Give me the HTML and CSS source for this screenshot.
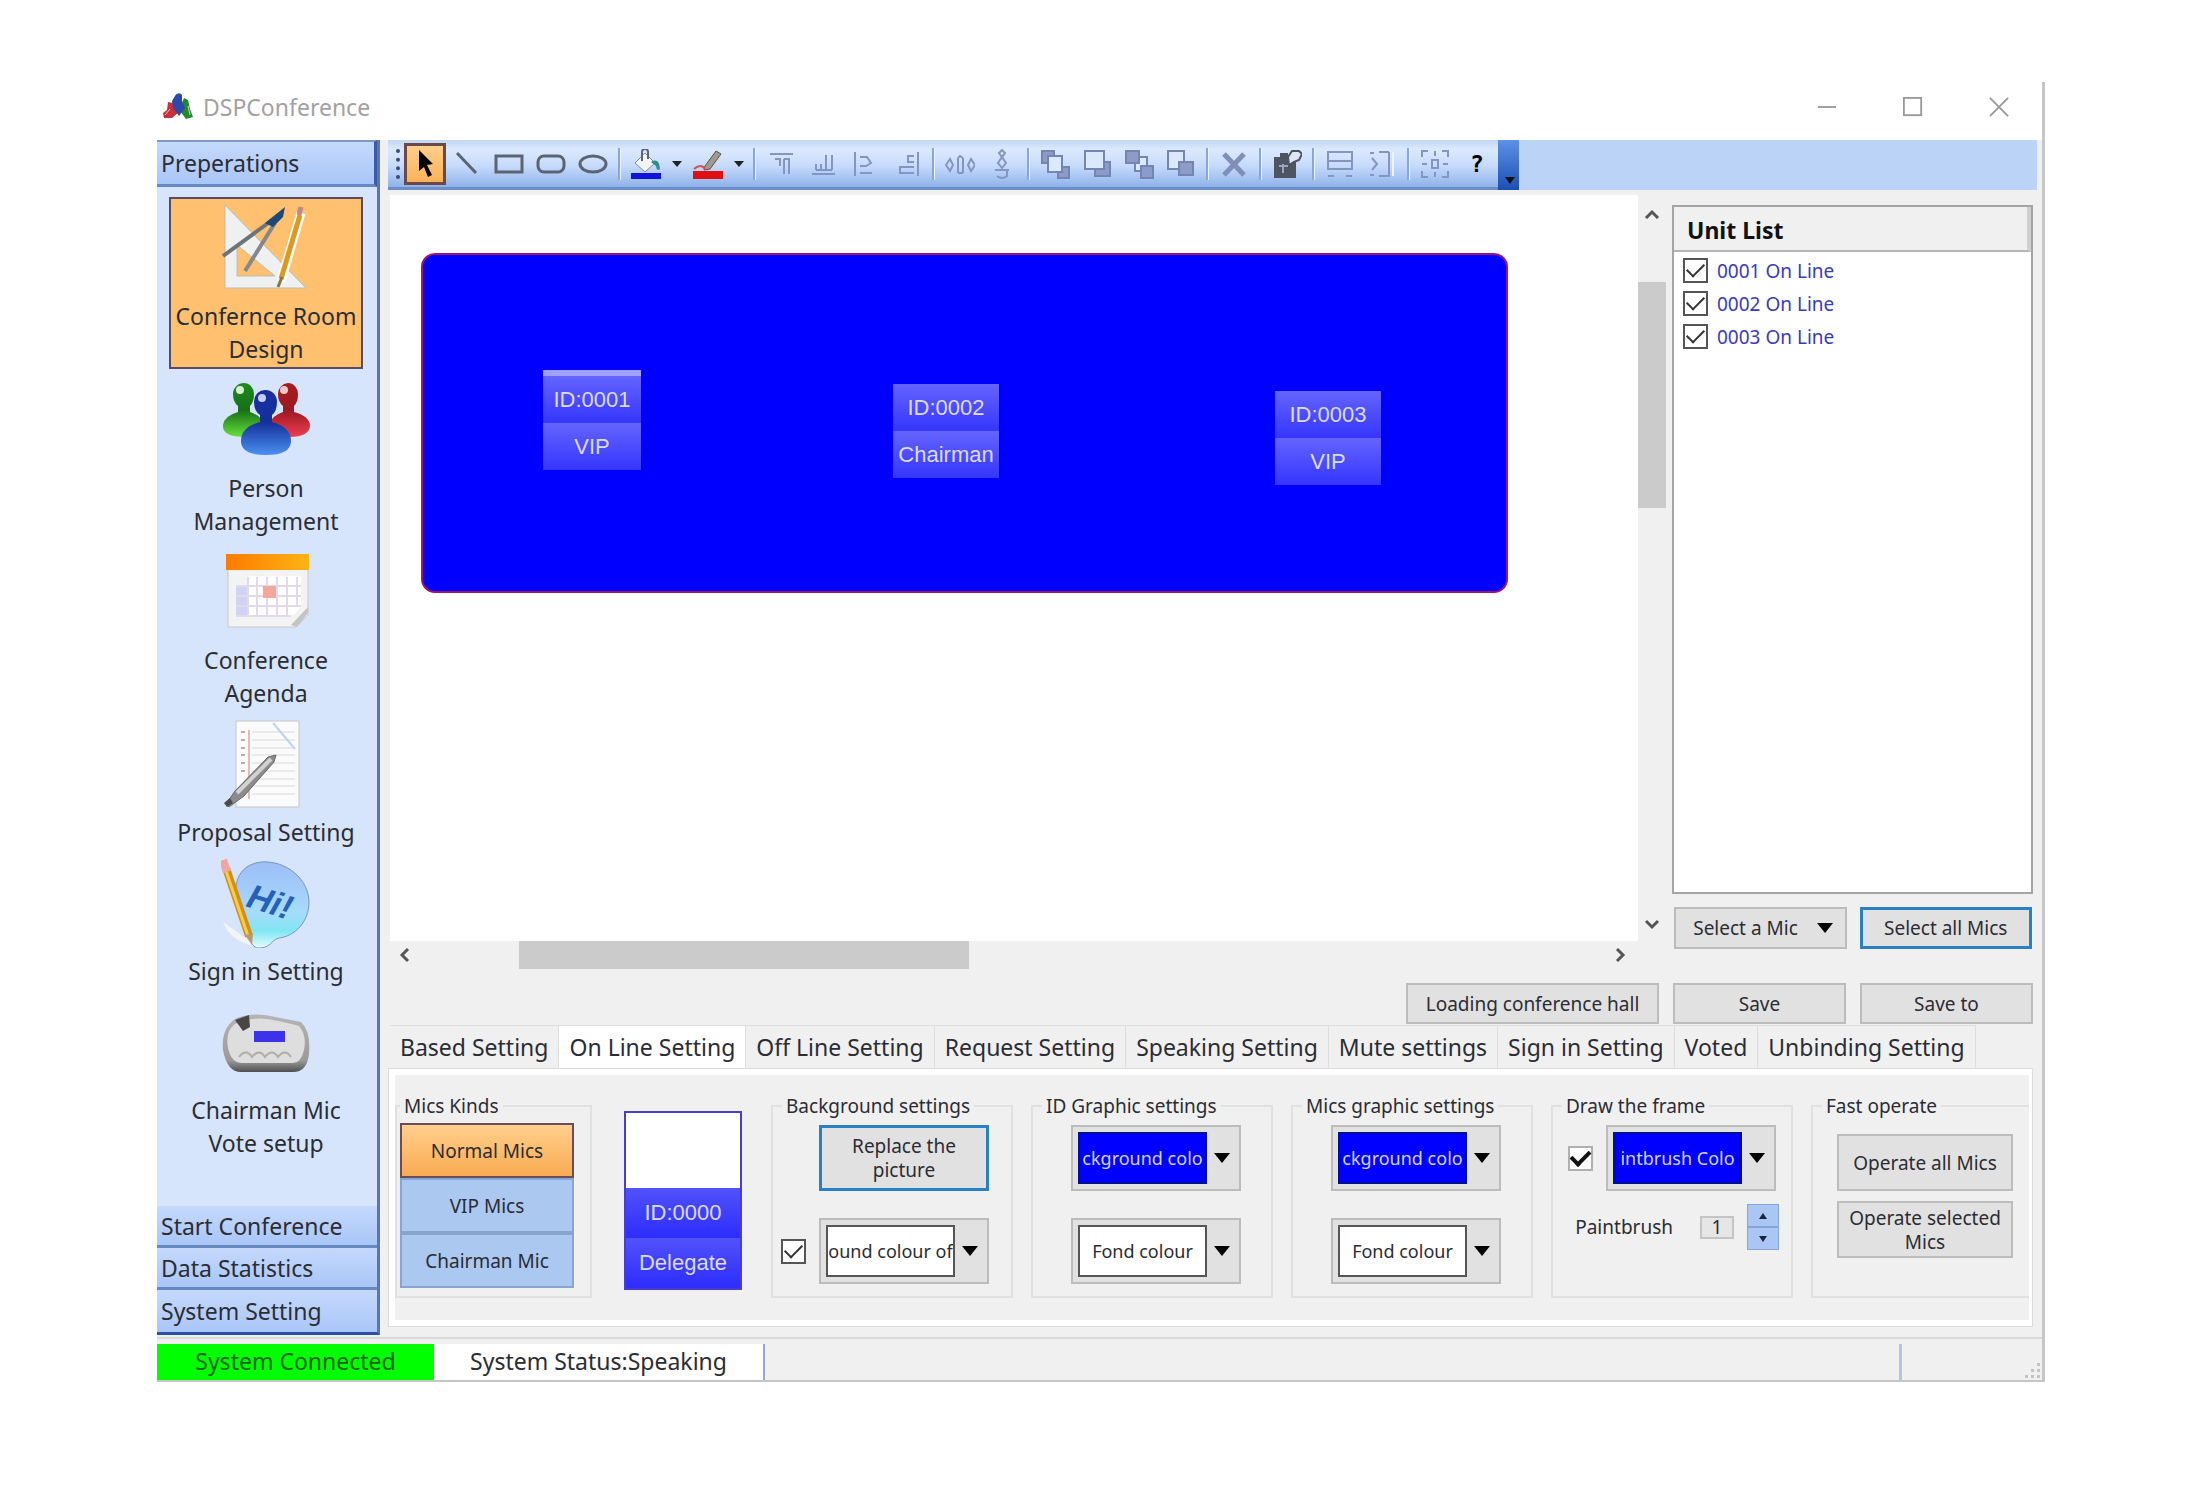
FILE: index.html
```html
<!DOCTYPE html>
<html lang="en">
<head>
  <meta charset="UTF-8">
  <title>DSPConference</title>
  <link rel="stylesheet" href="styles.css">
</head>
<body>

<div class="window">
  <header class="titlebar">
    <svg class="app-icon" viewBox="0 0 32 32">
      <path d="M11 12 L18 20 L10 27 L2 27 L1 22 L5 19 L6 11 Z" fill="#c8303c"/>
      <path d="M22 7 L26 9 L28 18 L31 26 L24 28 L18 20 L20 12 Z" fill="#1d8a2c"/>
      <path d="M13 5 A4 4 0 0 1 20 4 L20 10 L23 17 L17 25 L11 17 L10 10 Z" fill="#2b4aa8"/>
      <path d="M3 24 L8 18 M26 15 L28 24" stroke="#f3c0c4" stroke-width="1"/>
    </svg>
    <h1>DSPConference</h1>
    <div class="window-buttons">
      <button type="button" aria-label="Minimize"><svg viewBox="0 0 22 22"><path d="M1 11 H21"/></svg></button>
      <button type="button" aria-label="Maximize"><svg viewBox="0 0 22 22"><rect x="1" y="1" width="19" height="19"/></svg></button>
      <button type="button" aria-label="Close"><svg viewBox="0 0 22 22"><path d="M1 1 L21 21 M21 1 L1 21"/></svg></button>
    </div>
  </header>

  <div class="content">
    <nav class="sidebar">
      <button type="button" class="section first">Preperations</button>
      <div class="items">
        <button type="button" class="item active">
          <svg viewBox="0 0 90 90">
            <path d="M4 2 L85 85 H4 Z M16 42 V73 H54 Z" fill="#eef1f0" fill-rule="evenodd" stroke="#b9bdb8" stroke-width="1"/>
            <path d="M2 53 L50 18" stroke="#6d7479" stroke-width="4"/>
            <path d="M24 68 L54 20" stroke="#85878d" stroke-width="4"/>
            <path d="M44 20 L64 4 L62 14 L52 24 Z" fill="#1c4a78"/>
            <path d="M80 10 L60 78" stroke="#fff" stroke-width="9"/>
            <path d="M79 12 L60 76" stroke="#d99a1f" stroke-width="5"/>
            <path d="M80 4 L78 12" stroke="#c08a86" stroke-width="5"/>
            <path d="M61 74 L57 84" stroke="#8c7343" stroke-width="3"/>
          </svg>
          Confernce Room<br>Design
        </button>
        <button type="button" class="item">
          <svg viewBox="0 0 90 90">
            <defs>
              <linearGradient id="gGreen" x1="0" y1="0" x2="0" y2="1"><stop offset="0" stop-color="#1d8a1d"/><stop offset=".5" stop-color="#177017"/><stop offset="1" stop-color="#66e03c"/></linearGradient>
              <linearGradient id="gRed" x1="0" y1="0" x2="0" y2="1"><stop offset="0" stop-color="#a81c1c"/><stop offset=".5" stop-color="#9c1822"/><stop offset="1" stop-color="#f03e50"/></linearGradient>
              <linearGradient id="gBlue" x1="0" y1="0" x2="0" y2="1"><stop offset="0" stop-color="#1a2fa0"/><stop offset=".5" stop-color="#13319a"/><stop offset="1" stop-color="#4c90f0"/></linearGradient>
            </defs>
            <path d="M23 8 a10 11 0 0 1 10 11 q0 8 -4 12 v6 q12 4 13 12 q1 13 -18 13 q-23 0 -22 -12 q1 -9 15 -13 v-6 q-5 -4 -5 -12 a11 11 0 0 1 11 -11z" fill="url(#gGreen)"/>
            <path d="M67 8 a10 11 0 0 1 10 11 q0 8 -4 12 v6 q15 4 16 13 q0 12 -21 12 q-20 0 -19 -13 q1 -8 13 -12 v-6 q-5 -4 -5 -12 a11 11 0 0 1 10 -11z" fill="url(#gRed)"/>
            <path d="M45 15 a11 12 0 0 1 11 12 q0 9 -5 13 v7 q19 5 19 19 q0 14 -25 14 q-25 0 -25 -14 q0 -14 19 -19 v-7 q-6 -4 -6 -13 a11 12 0 0 1 12 -12z" fill="url(#gBlue)"/>
            <circle cx="19" cy="15" r="4" fill="#d5f2cc"/>
            <circle cx="63" cy="15" r="4" fill="#f2c6c6"/>
            <circle cx="41" cy="23" r="4" fill="#c5cdf5"/>
          </svg>
          Person<br>Management
        </button>
        <button type="button" class="item">
          <svg viewBox="0 0 90 90">
            <defs>
              <linearGradient id="gCal"><stop offset="0" stop-color="#ff7a00"/><stop offset="1" stop-color="#fbb414"/></linearGradient>
            </defs>
            <path d="M7 20 H87 V68 L75 80 H7 Z" fill="#f3f3f3" stroke="#c9c9c9"/>
            <rect x="5" y="7" width="83" height="16" fill="url(#gCal)"/>
            <path d="M15 39 H27 V29 H80 V60 L72 68 H15 Z" fill="#fff"/>
            <rect x="15" y="39" width="11" height="30" fill="#cfd3f5"/>
            <path d="M15 39 H80 M15 49 H80 M15 59 H80 M15 69 H70 M27 30 V69 M36 30 V69 M46 30 V69 M56 30 V69 M66 30 V69 M76 30 V60" stroke="#e2dae9" stroke-width="2" fill="none"/>
            <rect x="42" y="39" width="13" height="12" fill="#f3a79b"/>
            <path d="M70 78 L87 60 V66 L76 80 Z" fill="#c4c4c4"/>
          </svg>
          Conference<br>Agenda
        </button>
        <button type="button" class="item">
          <svg viewBox="0 0 90 90">
            <path d="M15 2 H78 V88 H15 Z" fill="#fbfbfb" stroke="#c6c6c6"/>
            <path d="M31 13 H74 M31 21 H74 M31 29 H74 M31 36 H74 M31 44 H74 M31 52 H74 M31 60 H74 M31 67 H74 M31 75 H74" stroke="#d5dade" stroke-width="1"/>
            <path d="M20 13 H24 M20 21 H24 M20 29 H24 M20 36 H24 M20 44 H24 M20 52 H24" stroke="#c3a9a9" stroke-width="2"/>
            <path d="M28 11 V80" stroke="#f0b5b5" stroke-width="2"/>
            <path d="M52 4 L74 30" stroke="#bcd4ee" stroke-width="2"/>
            <path d="M5 85 L14 72 L47 38 L55 36 L53 43 L23 77 L8 88 Z" fill="#8c8c8c" stroke="#6a6a6a" stroke-width="1"/>
            <path d="M16 74 L50 40" stroke="#d2d2d2" stroke-width="4"/>
            <path d="M3 84 L9 79 L12 84 L6 88 Z" fill="#4a4a4a"/>
          </svg>
          Proposal Setting
        </button>
        <button type="button" class="item">
          <svg viewBox="0 0 90 90">
            <defs>
              <linearGradient id="gHi" x1="0" y1="0" x2="0" y2="1"><stop offset="0" stop-color="#9dbdf8"/><stop offset=".6" stop-color="#a6dcfa"/><stop offset=".8" stop-color="#7fe6f4"/><stop offset="1" stop-color="#e8fbfb"/></linearGradient>
            </defs>
            <path d="M2 64 L30 84 L34 88 Q10 84 2 64Z" fill="#f4f4f4"/>
            <path d="M40 4 C66 2 88 22 88 44 C88 64 74 78 58 80 C50 82 50 90 38 90 C30 90 28 80 24 66 C12 48 6 8 40 4 Z" fill="url(#gHi)" stroke="#7c94bd" stroke-width="1"/>
            <text x="24" y="48" transform="rotate(18 24 48)" class="hi">Hi!</text>
            <path d="M5 10 L28 78" stroke="#d28f19" stroke-width="8"/>
            <path d="M4 10 L27 78" stroke="#f8cd4a" stroke-width="3"/>
            <path d="M2 2 L6 14" stroke="#efa6a0" stroke-width="8"/>
            <path d="M24 77 L32 75 L31 87 Z" fill="#b99a6c"/>
          </svg>
          Sign in Setting
        </button>
        <button type="button" class="item">
          <svg viewBox="0 0 90 90">
            <defs>
              <linearGradient id="gMic" x1="0" y1="0" x2="0" y2="1"><stop offset="0" stop-color="#b5b5b5"/><stop offset=".8" stop-color="#9a9a9a"/><stop offset="1" stop-color="#4f4f4f"/></linearGradient>
            </defs>
            <path d="M14 22 Q26 16 44 18 Q64 22 80 25 Q90 34 88 57 Q86 75 72 75 H20 Q6 75 2 53 Q0 32 14 22Z" fill="url(#gMic)"/>
            <path d="M14 27 Q30 20 46 22 Q64 25 78 29 Q86 38 83 53 Q80 66 72 66 H20 Q10 65 7 51 Q4 34 14 27Z" fill="#dedede"/>
            <path d="M14 23 L28 18 L29 30 L22 34 Z" fill="#4a4644"/>
            <rect x="33" y="34" width="31" height="11" fill="#3c32ea"/>
            <path d="M18 60 q7 -9 13 0 q7 -9 13 0 q7 -9 13 0 q7 -9 13 0" stroke="#b3aca6" fill="none" stroke-width="2"/>
          </svg>
          Chairman Mic<br>Vote setup
        </button>
      </div>
      <button type="button" class="section">Start Conference</button>
      <button type="button" class="section">Data Statistics</button>
      <button type="button" class="section">System Setting</button>
    </nav>

    <main class="main">
      <div class="toolbar-row">
        <div class="toolbar">
          <span class="grip"></span>
          <button type="button" class="tool active" aria-label="Select"><svg viewBox="0 0 30 30"><path d="M9 1 L23 15 L17 16 L22 26 L18 28 L14 18 L9 22 Z" fill="#000"/></svg></button>
          <button type="button" class="tool" aria-label="Line"><svg viewBox="0 0 30 30"><path d="M5 4 L24 24" class="ln"/></svg></button>
          <button type="button" class="tool" aria-label="Rectangle"><svg viewBox="0 0 30 30"><rect x="2" y="7" width="26" height="16" class="ln"/></svg></button>
          <button type="button" class="tool" aria-label="Rounded rectangle"><svg viewBox="0 0 30 30"><rect x="2" y="7" width="26" height="16" rx="6" class="ln"/></svg></button>
          <button type="button" class="tool" aria-label="Ellipse"><svg viewBox="0 0 30 30"><ellipse cx="15" cy="15" rx="13" ry="8" class="ln"/></svg></button>
          <span class="sep"></span>
          <button type="button" class="tool" aria-label="Fill colour"><svg viewBox="0 0 30 30"><path d="M4 14 L14 4 L24 14 L14 23 Z" fill="#f1f4f2" stroke="#7f8a8a"/><path d="M11 12 V3 a3 3 0 0 1 6 0 V10" class="ln thin"/><path d="M20 13 Q28 8 29 20 Q26 23 25 17 Z" fill="#2a8f8c"/><rect y="24" width="30" height="6" fill="#1414d8"/></svg></button>
          <button type="button" class="drop" aria-label="Fill colours"></button>
          <button type="button" class="tool" aria-label="Line colour"><svg viewBox="0 0 30 30"><path d="M12 17 L23 2 L28 5 L17 20 L11 21 Z" fill="#a39a8c" stroke="#55504a"/><path d="M1 20 Q8 14 12 20" stroke="#c55" fill="none" stroke-width="2"/><rect y="22" width="30" height="8" fill="#e01010"/></svg></button>
          <button type="button" class="drop" aria-label="Line colours"></button>
          <span class="sep"></span>
          <button type="button" class="tool" aria-label="Align top"><svg viewBox="0 0 30 30" class="dim"><path d="M4 5 H27 M9 10 H14 V17 M18 10 V25 M18 10 H23 V25"/></svg></button>
          <button type="button" class="tool" aria-label="Align bottom"><svg viewBox="0 0 30 30" class="dim"><path d="M4 25 H27 M8 21 V15 M13 21 V15 M18 21 V6 M24 21 V6 M8 21 H24"/></svg></button>
          <button type="button" class="tool" aria-label="Align left"><svg viewBox="0 0 30 30" class="dim"><path d="M5 3 V27 M10 8 H17 L21 14 L16 17 H10 M10 24 H22"/></svg></button>
          <button type="button" class="tool" aria-label="Align right"><svg viewBox="0 0 30 30" class="dim"><path d="M26 3 V27 M22 7 H16 V13 H22 M22 18 H8 V24 H22"/></svg></button>
          <span class="sep"></span>
          <button type="button" class="tool" aria-label="Space across"><svg viewBox="0 0 30 30" class="dim"><path d="M5 10 L1 16 L5 22 L8 16 Z M13 9 V24 M18 9 V24 M13 9 L15 7 L18 9 M13 24 H18 M26 10 L23 16 L26 22 L30 16 Z"/></svg></button>
          <button type="button" class="tool" aria-label="Space down"><svg viewBox="0 0 30 30" class="dim"><path d="M15 1 L18 4 L15 8 L12 4 Z M15 8 L19 14 L15 19 L11 14 Z M8 21 H22 M10 27 Q15 31 20 27 V21"/></svg></button>
          <span class="sep"></span>
          <button type="button" class="tool" aria-label="Bring to front"><svg viewBox="0 0 30 30" class="stack"><rect x="2" y="2" width="12" height="12"/><rect x="18" y="18" width="11" height="11"/><rect x="8" y="7" width="14" height="16" class="sheet"/></svg></button>
          <button type="button" class="tool" aria-label="Send to back"><svg viewBox="0 0 30 30" class="stack"><rect x="13" y="13" width="15" height="14"/><rect x="3" y="2" width="19" height="18" class="sheet"/></svg></button>
          <button type="button" class="tool" aria-label="Bring forward"><svg viewBox="0 0 30 30" class="stack"><rect x="11" y="8" width="12" height="14" class="sheet"/><rect x="2" y="2" width="13" height="12"/><rect x="17" y="17" width="12" height="12"/></svg></button>
          <button type="button" class="tool" aria-label="Send backward"><svg viewBox="0 0 30 30" class="stack"><rect x="2" y="2" width="16" height="18" class="sheet"/><rect x="13" y="13" width="14" height="13"/></svg></button>
          <span class="sep"></span>
          <button type="button" class="tool" aria-label="Delete"><svg viewBox="0 0 30 30"><path d="M5 5 L25 26 M25 5 L5 26" stroke="#7f8fb8" stroke-width="5"/></svg></button>
          <span class="sep"></span>
          <button type="button" class="tool" aria-label="Properties"><svg viewBox="0 0 30 30"><path d="M2 8 H8 V4 H16 V8 H24 V29 H2 Z" fill="#4d5462"/><path d="M16 8 L20 2 H27 L30 5 L27 11 L22 13 L17 16 Z" fill="#dfe7f6" stroke="#4d5462" stroke-width="2"/><path d="M11 15 V24 M7 17 H16" stroke="#98a5c0" stroke-width="2"/></svg></button>
          <span class="sep"></span>
          <button type="button" class="tool" aria-label="Same width"><svg viewBox="0 0 30 30" class="dim"><path d="M3 12 V3 H27 V20 H3 V12 H27 M3 27 H9 M21 27 H27"/></svg></button>
          <button type="button" class="tool" aria-label="Same height"><svg viewBox="0 0 30 30" class="dim"><path d="M3 4 H7 M3 26 H7 M12 3 H22 M12 27 H22 V3 M5 9 L10 15 L5 21"/><path d="M26 3 V27" stroke="#eef4ff"/></svg></button>
          <span class="sep"></span>
          <button type="button" class="tool" aria-label="Centre"><svg viewBox="0 0 30 30" class="dim"><path d="M2 8 V2 H8 M22 2 H28 V8 M28 22 V28 H22 M8 28 H2 V22 M12 11 H18 V19 H12 Z M15 2 V7 M15 23 V28 M2 15 H7 M23 15 H28"/></svg></button>
          <button type="button" class="tool help" aria-label="Help">?</button>
          <span class="overflow"></span>
        </div>
      </div>

      <div class="workspace">
        <div class="hall">
          <div class="hall-view">
            <div class="table">
              <div class="mic mic-1"><span>ID:0001</span><span>VIP</span></div>
              <div class="mic mic-2"><span>ID:0002</span><span>Chairman</span></div>
              <div class="mic mic-3"><span>ID:0003</span><span>VIP</span></div>
            </div>
          </div>
          <div class="scroll-v">
            <svg viewBox="0 0 16 16"><path d="M2 11 L8 5 L14 11"/></svg>
            <div class="thumb"></div>
            <svg viewBox="0 0 16 16"><path d="M2 5 L8 11 L14 5"/></svg>
          </div>
          <div class="scroll-h">
            <svg viewBox="0 0 16 16"><path d="M11 2 L5 8 L11 14"/></svg>
            <div class="thumb"></div>
            <svg viewBox="0 0 16 16"><path d="M5 2 L11 8 L5 14"/></svg>
          </div>
        </div>

        <aside class="units">
          <div class="unit-list">
            <h2>Unit List</h2>
            <label><input type="checkbox" class="check" checked>0001 On Line</label>
            <label><input type="checkbox" class="check" checked>0002 On Line</label>
            <label><input type="checkbox" class="check" checked>0003 On Line</label>
          </div>
          <div class="unit-actions">
            <span class="picker mic-picker">
              <select aria-label="Select a Mic"><option>Select a Mic</option></select>
            </span>
            <button type="button" class="btn focus">Select all Mics</button>
          </div>
        </aside>
      </div>

      <div class="hall-actions">
        <button type="button" class="btn load">Loading conference hall</button>
        <button type="button" class="btn">Save</button>
        <button type="button" class="btn">Save to</button>
      </div>

      <div class="tabs">
        <button type="button">Based Setting</button>
        <button type="button" class="active">On Line Setting</button>
        <button type="button">Off Line Setting</button>
        <button type="button">Request Setting</button>
        <button type="button">Speaking Setting</button>
        <button type="button">Mute settings</button>
        <button type="button">Sign in Setting</button>
        <button type="button">Voted</button>
        <button type="button">Unbinding Setting</button>
      </div>

      <div class="panel">
        <fieldset class="kinds">
          <legend>Mics Kinds</legend>
          <button type="button" class="active">Normal Mics</button>
          <button type="button">VIP Mics</button>
          <button type="button">Chairman Mic</button>
        </fieldset>

        <div class="preview">
          <span>ID:0000</span>
          <span>Delegate</span>
        </div>

        <fieldset>
          <legend>Background settings</legend>
          <div class="row">
            <button type="button" class="btn tall focus">Replace the<br>picture</button>
          </div>
          <div class="row">
            <input type="checkbox" class="check" aria-label="Use background colour" checked>
            <span class="picker"><select aria-label="Background colour"><option>ound colour of</option></select></span>
          </div>
        </fieldset>

        <fieldset>
          <legend>ID Graphic settings</legend>
          <div class="row">
            <span class="picker"><select class="blue" aria-label="ID background colour"><option>ckground colo</option></select></span>
          </div>
          <div class="row">
            <span class="picker"><select aria-label="ID font colour"><option>Fond colour</option></select></span>
          </div>
        </fieldset>

        <fieldset>
          <legend>Mics graphic settings</legend>
          <div class="row">
            <span class="picker"><select class="blue" aria-label="Mic background colour"><option>ckground colo</option></select></span>
          </div>
          <div class="row">
            <span class="picker"><select aria-label="Mic font colour"><option>Fond colour</option></select></span>
          </div>
        </fieldset>

        <fieldset class="frame">
          <legend>Draw the frame</legend>
          <div class="row">
            <input type="checkbox" class="check bold" aria-label="Draw the frame" checked>
            <span class="picker"><select class="blue" aria-label="Paintbrush colour"><option>intbrush Colo</option></select></span>
          </div>
          <div class="row brush">
            <label for="brush">Paintbrush</label>
            <input type="text" id="brush" value="1">
            <span class="spinner">
              <button type="button" aria-label="Thicker"></button>
              <button type="button" class="down" aria-label="Thinner"></button>
            </span>
          </div>
        </fieldset>

        <fieldset class="fast">
          <legend>Fast operate</legend>
          <button type="button" class="btn">Operate all Mics</button>
          <button type="button" class="btn">Operate selected<br>Mics</button>
        </fieldset>
      </div>
    </main>
  </div>

  <footer class="statusbar">
    <span class="connected">System Connected</span>
    <span class="status">System Status:Speaking</span>
    <span class="rest"></span>
    <span class="corner">
      <svg viewBox="0 0 18 18"><path d="M13 1h3v3h-3z M13 7h3v3h-3z M7 7h3v3H7z M13 13h3v3h-3z M7 13h3v3H7z M1 13h3v3H1z" fill="#c3c3c3"/></svg>
    </span>
  </footer>
</div>

</body>
</html>
```
FILE: styles.css
```css
* {
  box-sizing: border-box;
}
body {
  margin: 0;
  min-height: 100vh;
  padding: 82px 140px 114px 157px;
  display: flex;
  background: #fff;
  font-family: "Noto Sans", "Open Sans", sans-serif;
  font-size: 23px;
  color: #2c2c34;
}
button, select, input {
  font: inherit;
  color: inherit;
  margin: 0;
  padding: 0;
  border: 0;
  background: none;
}
.window {
  flex: 1;
  min-width: 0;
  display: flex;
  flex-direction: column;
  background: #f0f0f0;
  border-right: 3px solid #c6c6c6;
  border-bottom: 2px solid #c6c6c6;
}

/* title bar */
.titlebar {
  height: 58px;
  display: flex;
  align-items: center;
  padding: 0 33px 8px 5px;
  background: #fff;
}
.app-icon {
  width: 32px;
  height: 32px;
  margin-right: 9px;
}
h1 {
  margin: 0;
  font-size: 23px;
  font-weight: normal;
  color: #a2a2a2;
}
.window-buttons {
  margin-left: auto;
  display: flex;
  gap: 66px;
}
.window-buttons svg {
  display: block;
  width: 20px;
  height: 20px;
  fill: none;
  stroke: #999;
  stroke-width: 2;
}

/* left menu */
.content {
  flex: 1;
  display: flex;
}
.sidebar {
  width: 223px;
  margin-right: 8px;
  display: flex;
  flex-direction: column;
  background: #d6e5fb;
  border-right: 3px solid #5a74b4;
  border-bottom: 3px solid #2a50a4;
}
.section {
  height: 42px;
  padding: 0 4px;
  text-align: left;
  line-height: 30px;
  background: linear-gradient(#c5d9fc, #a9c6f8);
  border-bottom: 3px solid #6689c2;
}
.section:last-child {
  border-bottom: 0;
}
.section.first {
  height: 47px;
  border-top: 2px solid #7d9ac6;
  border-right: 3px solid #3a5ca8;
}
.items {
  flex: 1;
  padding: 10px 12px 0;
}
.item {
  display: block;
  width: 194px;
  padding: 6px 0 3px;
  line-height: 33px;
  white-space: nowrap;
}
.item.active {
  padding: 4px 0 1px;
  background: #ffc06f;
  border: 2px solid #5a4a64;
}
.item svg {
  display: block;
  width: 90px;
  height: 90px;
  margin: 0 auto 7px;
}
.hi {
  font: italic bold 34px "Liberation Sans", sans-serif;
  fill: #2760b8;
}

/* drawing tools */
.main {
  flex: 1;
  min-width: 0;
  display: flex;
  flex-direction: column;
  padding: 0 5px 8px 0;
}
.toolbar-row {
  height: 50px;
  display: flex;
  background: #bcd3f8;
}
.toolbar {
  display: flex;
  align-items: center;
  background: linear-gradient(#c3d6f5, #dbe9fd 20%, #c6dbfb 55%, #8fb2ea);
  border-bottom: 3px solid #6c8fc9;
}
.grip {
  width: 4px;
  height: 30px;
  margin: 0 4px 0 8px;
  border-left: 4px dotted #3e4c6c;
}
.tool {
  width: 42px;
  height: 42px;
}
.tool.active {
  background: linear-gradient(#ffce8b, #fbb259);
  border: 3px solid #6a4a48;
}
.tool svg {
  display: block;
  width: 30px;
  height: 30px;
  margin: auto;
}
.tool .ln {
  fill: none;
  stroke: #5c6474;
  stroke-width: 3;
}
.tool .ln.thin {
  stroke-width: 2;
}
.dim {
  fill: none;
  stroke: #8395c0;
  stroke-width: 2;
}
.stack {
  fill: #8b9cc8;
  stroke: #7485b2;
  stroke-width: 2;
}
.stack .sheet {
  fill: #dce8fb;
}
.drop {
  width: 20px;
  height: 42px;
}
.drop::after {
  content: "";
  display: block;
  width: 0;
  margin: auto;
  border: 5px solid transparent;
  border-top: 6px solid #222;
  border-bottom: 0;
}
.sep {
  width: 3px;
  height: 32px;
  margin: 0 4px;
  border-left: 2px solid #8ba6d6;
  border-right: 1px solid #e8f1ff;
}
.help {
  font-family: "DejaVu Sans Mono", monospace;
  font-weight: bold;
  color: #000;
}
.overflow {
  width: 21px;
  height: 50px;
  margin: 0 0 -3px;
  display: flex;
  align-items: flex-end;
  background: linear-gradient(#5d92e6, #1c4fb4);
}
.overflow::after {
  content: "";
  margin: 0 0 6px 7px;
  border: 5px solid transparent;
  border-top: 7px solid #111;
  border-bottom: 0;
}

/* conference hall */
.workspace {
  flex: 1;
  display: flex;
  gap: 6px;
  padding: 5px 4px 0 2px;
}
.hall {
  flex: 1;
  display: grid;
  grid-template-columns: 1fr 28px;
  grid-template-rows: 1fr 28px;
}
.hall-view {
  position: relative;
  background: #fff;
}
.table {
  position: absolute;
  left: 31px;
  top: 58px;
  width: 1087px;
  height: 340px;
  background: #00f;
  border: 2px solid #a0146e;
  border-radius: 14px;
}
.mic {
  position: absolute;
  width: 106px;
  color: #dcdcff;
  font: 22px "Liberation Sans", sans-serif;
  text-align: center;
}
.mic span {
  display: block;
  line-height: 47px;
  background: linear-gradient(#6464ff, #3535ff);
}
.mic-1 {
  left: 120px;
  top: 115px;
  width: 98px;
  border-top: 6px solid #a0a0ff;
}
.mic-2 {
  left: 470px;
  top: 129px;
}
.mic-3 {
  left: 852px;
  top: 136px;
}
.scroll-v, .scroll-h {
  display: flex;
  justify-content: space-between;
  align-items: center;
}
.scroll-v {
  flex-direction: column;
  padding: 12px 0 9px;
}
.scroll-h {
  padding: 0 10px 0 7px;
}
.hall svg {
  width: 16px;
  height: 16px;
  fill: none;
  stroke: #555;
  stroke-width: 3;
}
.thumb {
  background: #cbcbcb;
}
.scroll-v .thumb {
  width: 28px;
  height: 226px;
  margin: 59px 0 auto;
}
.scroll-h .thumb {
  width: 450px;
  height: 28px;
  margin: 0 auto 0 106px;
}

/* unit list */
.units {
  width: 361px;
  padding-top: 10px;
  display: flex;
  flex-direction: column;
}
.unit-list {
  flex: 1;
  background: #fff;
  border: 2px solid #a4a4a4;
  color: #3a3ac0;
  font-size: 19px;
}
.unit-list h2 {
  margin: 0 0 2px;
  height: 45px;
  padding-left: 13px;
  line-height: 46px;
  font-size: 23px;
  color: #111;
  background: #f0f0f0;
  border-bottom: 2px solid #b4b4b4;
  border-right: 4px solid #d0d0d0;
}
.unit-list label {
  display: flex;
  align-items: center;
  gap: 9px;
  height: 33px;
  padding-left: 9px;
}
.check {
  appearance: none;
  width: 25px;
  height: 25px;
  display: grid;
  place-items: center;
  background: #fff;
  border: 2px solid #555;
}
.check:checked::after {
  content: "";
  width: 15px;
  height: 8px;
  margin-bottom: 5px;
  border-left: 2px solid #333;
  border-bottom: 2px solid #333;
  transform: rotate(-45deg);
}
.check.bold {
  border-color: #b0b0b0;
}
.check.bold::after {
  border-width: 4px;
  border-color: #111;
}
.unit-actions {
  height: 75px;
  padding: 13px 1px 20px 2px;
  display: grid;
  grid-template-columns: 1fr 1fr;
  gap: 13px;
}
.btn, .picker {
  font-size: 19px;
  line-height: 24px;
  background: #e1e1e1;
  border: 2px solid #bcbcbc;
}
.btn.focus {
  border: 3px solid #2a80c4;
}
.picker {
  display: flex;
  align-items: center;
  width: 170px;
  height: 66px;
  padding-left: 5px;
}
.picker select {
  appearance: none;
  width: 129px;
  height: 52px;
  background: #fff;
  border: 2px solid #555;
  font-size: 18px;
  text-align: center;
}
.picker select.blue {
  background: #00f;
  border-color: #001090;
  color: #d4d4ff;
}
.picker::after {
  content: "";
  margin-left: 7px;
  border: 8px solid transparent;
  border-top: 10px solid #000;
  border-bottom: 0;
}
.mic-picker {
  width: auto;
  height: auto;
}
.mic-picker select {
  height: 36px;
  background: none;
  border: 0;
  font-size: 19px;
}
.hall-actions {
  display: flex;
  justify-content: flex-end;
  gap: 14px;
  padding: 14px 4px 1px;
}
.hall-actions .btn {
  width: 173px;
  height: 41px;
}
.hall-actions .load {
  width: 253px;
}

/* settings */
.tabs {
  display: flex;
  height: 43px;
  padding-left: 2px;
}
.tabs button {
  padding: 0 10px;
  border: 1px solid #dedede;
  border-width: 1px 1px 0 0;
  white-space: nowrap;
}
.tabs .active {
  background: #fff;
}
.panel {
  display: flex;
  align-items: flex-start;
  gap: 18px;
  height: 259px;
  margin-right: 4px;
  padding: 18px 0 0;
  border: 7px solid #fff;
  border-right-width: 4px;
  outline: 1px solid #dcdcdc;
  outline-offset: -1px;
  font-size: 19px;
}
fieldset {
  width: 242px;
  height: 205px;
  margin: 0;
  padding: 6px 0 0;
  border: 2px solid #e0e0e0;
}
legend {
  margin-left: 9px;
  padding: 0 4px;
  line-height: 26px;
}
.kinds {
  width: 197px;
  padding: 4px 0 0 3px;
}
.kinds legend {
  margin-left: 0;
}
.kinds button {
  display: block;
  width: 174px;
  height: 55px;
  background: #abc8f1;
  border: 2px solid #86a5cf;
}
.kinds .active {
  background: linear-gradient(#ffcf8c, #f9ab52);
  border-color: #6b4c5c;
}
.preview {
  width: 118px;
  margin: 18px 11px 0 14px;
  padding-top: 75px;
  background: #fff;
  border: 2px solid #4a3cd0;
  color: #dcdcff;
  font: 22px "Liberation Sans", sans-serif;
  text-align: center;
}
.preview span {
  display: block;
  line-height: 50px;
  background: linear-gradient(#5252fa, #2c2cff);
}
.row {
  display: flex;
  justify-content: flex-end;
  align-items: center;
  gap: 13px;
  height: 66px;
  margin-bottom: 27px;
  padding-right: 30px;
}
.row:has(.focus), .row:has(.check) {
  padding-right: 22px;
}
.tall {
  width: 170px;
  height: 66px;
}
.frame .row {
  padding-right: 15px;
}
.frame .brush {
  height: 46px;
  margin-top: -14px;
  padding-right: 12px;
}
.brush label {
  margin-right: 14px;
}
.brush input {
  width: 34px;
  height: 23px;
  text-align: center;
  background: #e6e6e6;
  border: 2px solid #c4c4c4;
}
.spinner {
  width: 32px;
}
.spinner button {
  display: grid;
  place-items: center;
  width: 32px;
  height: 23px;
  background: #a9c6f4;
  border: 1px solid #86a5d8;
}
.spinner button::after {
  content: "";
  border: 4px solid transparent;
  border-bottom: 6px solid #1c2440;
  border-top: 0;
}
.spinner .down::after {
  border-top: 6px solid #1c2440;
  border-bottom: 0;
}
.fast {
  flex: 1;
  padding: 15px 16px 0 0;
  border-right: 0;
}
.fast .btn {
  display: block;
  width: 176px;
  height: 57px;
  margin: 0 0 10px auto;
}

/* status bar */
.statusbar {
  height: 43px;
  margin-top: 2px;
  padding-top: 5px;
  border-top: 2px solid #dadada;
  display: flex;
  line-height: 34px;
  text-align: center;
}
.connected {
  width: 277px;
  background: #0f0;
  color: #146414;
}
.status {
  width: 331px;
  background: #fff;
  border-right: 2px solid #94a9cc;
}
.rest {
  flex: 1;
  border-right: 3px solid #b4c6de;
}
.corner {
  width: 140px;
  display: flex;
  justify-content: flex-end;
  align-items: flex-end;
}
.corner svg {
  width: 18px;
  height: 18px;
}
```
